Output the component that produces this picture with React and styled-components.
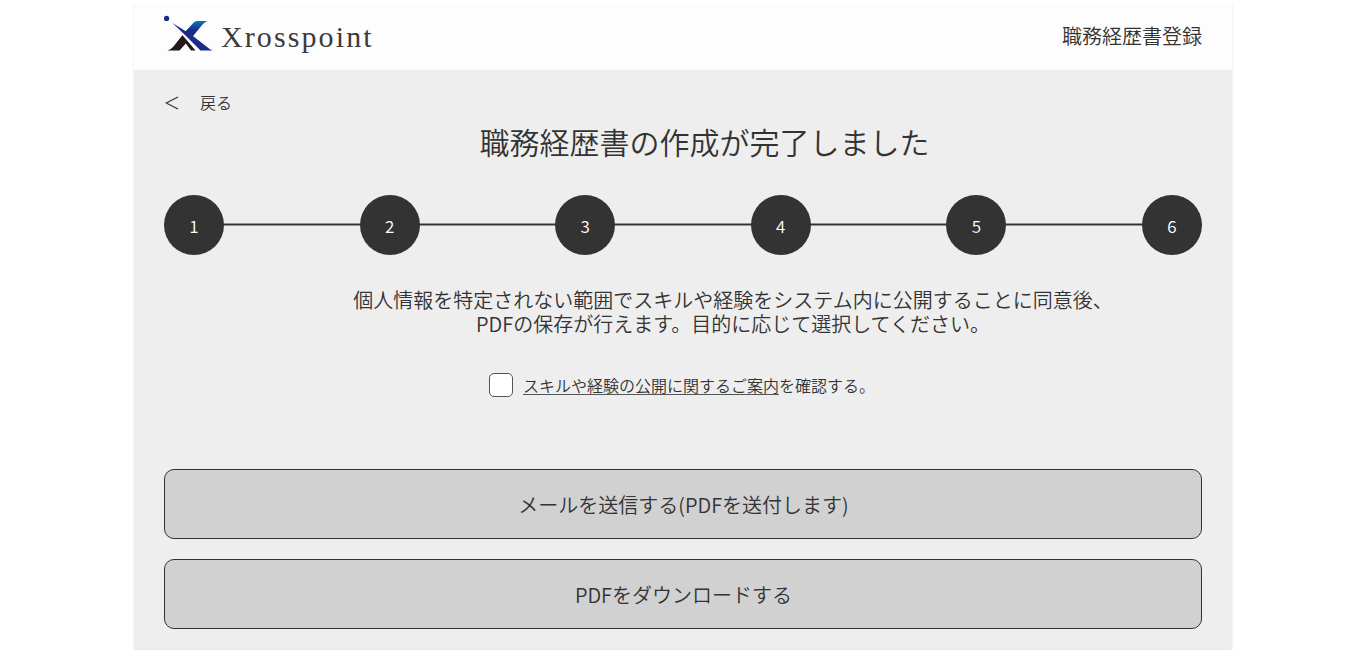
import React from "react";
import styled, { createGlobalStyle } from "styled-components";

const GlobalStyle = createGlobalStyle`
  * { box-sizing: border-box; }
  body {
    margin: 0;
    background: #fff;
    color: #333;
    font-family: "Noto Sans CJK JP", "Noto Sans", sans-serif;
    font-weight: 350;
  }
`;

const Page = styled.div`
  height: 650px;
  padding-top: 4px;
  overflow: hidden;
`;

const Sheet = styled.div`
  display: flex;
  flex-direction: column;
  width: 1098px;
  height: 645px;
  margin: 0 auto;
  background: #eee;
  box-shadow: 0 1px 2px rgba(0, 0, 0, 0.13);
`;

const Header = styled.header`
  display: flex;
  justify-content: space-between;
  align-items: flex-start;
  height: 66px;
  padding: 0 30px;
  background: #fdfdfd;
`;

const Brand = styled.div`
  display: flex;
  align-items: flex-start;
  padding-top: 10px;
`;

const BrandName = styled.span`
  margin: 7px 0 0 8px;
  color: #3e3a39;
  font: 400 30px/32px "Liberation Serif", serif;
  letter-spacing: 2.1px;
`;

const HeaderTitle = styled.span`
  margin-top: 17px;
  font-size: 20px;
  line-height: 30px;
`;

const Main = styled.main`
  display: flex;
  flex-direction: column;
  padding: 0 30px;
`;

const BackLink = styled.a`
  display: flex;
  align-items: center;
  gap: 20px;
  margin-top: 21px;
  height: 24px;
  font-size: 16px;
  line-height: 22px;

  span {
    padding-bottom: 2px;
  }
`;

const Title = styled.h1`
  margin: 4px 0 0;
  padding-left: 43px;
  font-size: 30px;
  font-weight: 350;
  line-height: 44px;
  text-align: center;
`;

const Steps = styled.ol`
  display: flex;
  justify-content: space-between;
  margin: 32px 0 0;
  padding: 0;
  height: 60px;
  list-style: none;
  background: linear-gradient(#919491 0 1px, #333 1px 2px, #919491 2px 3px)
    0 28px / 100% 3px no-repeat;
`;

const Step = styled.li`
  width: 60px;
  height: 60px;
  border-radius: 50%;
  background: #333;
  color: #fff;
  font-size: 17px;
  line-height: 61px;
  text-align: center;
`;

const Message = styled.p`
  margin: 33px 0 0;
  padding-left: 100px;
  font-size: 20px;
  line-height: 24px;
  text-align: center;
`;

const Consent = styled.label`
  display: flex;
  justify-content: center;
  gap: 10px;
  margin-top: 37px;
  padding-right: 2px;
  font-size: 16px;
  line-height: 24px;
`;

const Checkbox = styled.input`
  appearance: none;
  width: 24px;
  height: 24px;
  margin: 0;
  border: 1px solid #555;
  border-radius: 5px;
  background: #fff;
`;

const GuideLink = styled.a`
  display: inline-block;
  height: 22px;
  border-bottom: 1px solid #555;
`;

const Actions = styled.div`
  display: flex;
  flex-direction: column;
  gap: 20px;
  margin-top: 72px;
`;

const ActionButton = styled.button`
  height: 70px;
  padding: 0 0 0 1px;
  border: 1px solid #333;
  border-radius: 10px;
  background: #d1d1d1;
  color: #333;
  font-family: inherit;
  font-size: 20px;
  font-weight: inherit;
`;

const Logo = () => (
  <svg width="49" height="40" viewBox="0 0 49 40" aria-hidden="true">
    <defs>
      <linearGradient id="wing" x1="0" y1="0" x2="0" y2="1">
        <stop offset="0" stopColor="#0877b8" />
        <stop offset="0.55" stopColor="#1c2a8c" />
      </linearGradient>
    </defs>
    <circle cx="2.6" cy="4.4" r="2.6" fill="#1c2a8c" />
    <path d="M20 19L30 8.2Q31.5 7 34 7H43.5Q40.5 8 38.5 10.5L27.5 24Z" fill="url(#wing)" />
    <path d="M8.5 9L27 20.5L42.5 32.5Q45 35 48.5 36.5H36.5L20.5 20.5Z" fill="#1c2a8c" />
    <path d="M3.5 36.5Q7 35.5 9.5 32.5L18.5 21L31.5 36.5H27L21.8 29.5L15.5 36.5Z" fill="#251a19" />
    <path d="M16 17.5L34.3 37" fill="none" stroke="#fdfdfd" strokeWidth="1.1" />
  </svg>
);

const BackArrow = () => (
  <svg width="16" height="16" viewBox="0 0 16 16" aria-hidden="true">
    <path d="M14 2L2.2 8L14 14" fill="none" stroke="#333" strokeWidth="1.1" />
  </svg>
);

export default function App() {
  return (
    <>
      <GlobalStyle />
      <Page>
        <Sheet>
          <Header>
            <Brand>
              <Logo />
              <BrandName>Xrosspoint</BrandName>
            </Brand>
            <HeaderTitle>職務経歴書登録</HeaderTitle>
          </Header>
          <Main>
            <BackLink>
              <BackArrow />
              <span>戻る</span>
            </BackLink>
            <Title>職務経歴書の作成が完了しました</Title>
            <Steps>
              {[1, 2, 3, 4, 5, 6].map((n) => (
                <Step key={n}>{n}</Step>
              ))}
            </Steps>
            <Message>
              個人情報を特定されない範囲でスキルや経験をシステム内に公開することに同意後、
              <br />
              PDFの保存が行えます。目的に応じて選択してください。
            </Message>
            <Consent>
              <Checkbox type="checkbox" />
              <span>
                <GuideLink>スキルや経験の公開に関するご案内</GuideLink>
                を確認する。
              </span>
            </Consent>
            <Actions>
              <ActionButton>メールを送信する(PDFを送付します)</ActionButton>
              <ActionButton>PDFをダウンロードする</ActionButton>
            </Actions>
          </Main>
        </Sheet>
      </Page>
    </>
  );
}
